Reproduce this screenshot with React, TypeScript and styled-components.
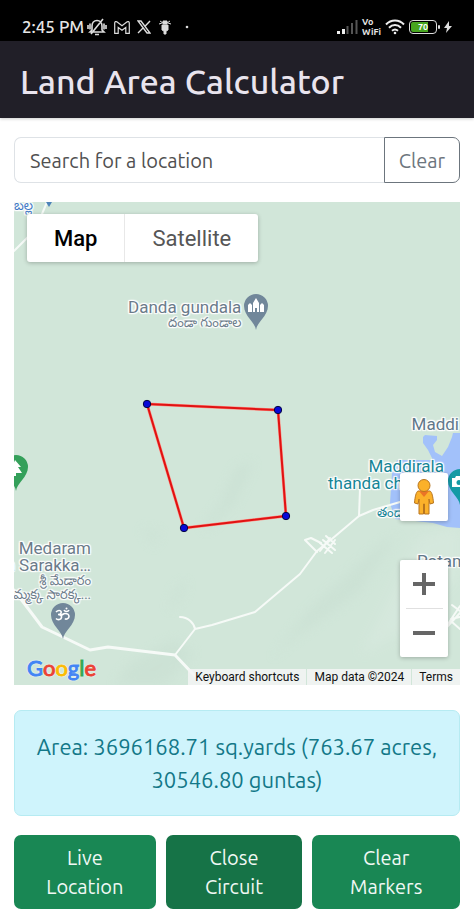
import React from "react";
import styled, { createGlobalStyle } from "styled-components";

const uiFont = `Ubuntu, "Noto Sans", "Open Sans", sans-serif`;
const mapFont = `Roboto, "Noto Sans Telugu", sans-serif`;

const GlobalStyle = createGlobalStyle`
  *, *::before, *::after { box-sizing: border-box; }
  body { margin: 0; background: #fff; font-family: ${uiFont}; }
  button, input { font: inherit; }
`;

const Page = styled.div`
  display: flex;
  flex-direction: column;
`;

const StatusBar = styled.div`
  display: flex;
  align-items: flex-end;
  justify-content: space-between;
  height: 41px;
  padding: 0 22px 3px;
  background: #000;
  color: #e6e6e6;
`;

const StatusGroup = styled.div<{ $gap: number }>`
  display: flex;
  align-items: center;
  gap: ${(p) => p.$gap}px;
  height: 22px;
  svg { display: block; flex: none; }
`;

const Clock = styled.span`
  font-size: 17px;
  font-weight: 500;
  line-height: 22px;
  white-space: nowrap;
`;

const VoWifi = styled.span`
  display: flex;
  flex-direction: column;
  font-size: 9px;
  font-weight: 700;
  line-height: 10px;
`;

const Battery = styled.span`
  display: flex;
  align-items: center;
  gap: 1px;
  &::after { content: ""; width: 2px; height: 4px; background: #ddd; border-radius: 1px; }
`;

const BatteryCell = styled.span`
  width: 28px;
  height: 14px;
  border: 1px solid #ddd;
  border-radius: 4px;
  padding: 1px;
  background: linear-gradient(90deg, #47a51f 70%, #000 70%) content-box;
  font-size: 9px;
  font-weight: 700;
  line-height: 10px;
  text-align: center;
  color: #fff;
`;

const Header = styled.header`
  display: flex;
  align-items: center;
  height: 77px;
  padding: 2px 20px 0;
  background: #211f28;
  box-shadow: 0 1px 3px rgba(0, 0, 0, 0.2);
`;

const Title = styled.h1`
  margin: 0;
  font-size: 34px;
  font-weight: 500;
  line-height: 40px;
  color: #e9e4ee;
  white-space: nowrap;
`;

const Content = styled.main`
  display: flex;
  flex-direction: column;
  padding: 19px 14px 12px;
`;

const SearchRow = styled.form`
  display: flex;
  height: 46px;
  margin-bottom: 19px;
`;

const SearchInput = styled.input`
  flex: 1;
  min-width: 0;
  padding: 0 15px;
  border: 1px solid #dee2e6;
  border-right: 0;
  border-radius: 7px 0 0 7px;
  background: #fff;
  font-size: 20px;
  color: #555;
  outline: none;
  &::placeholder { color: #505050; opacity: 1; }
`;

const ClearButton = styled.button`
  width: 76px;
  padding: 0;
  border: 1px solid #6c757d;
  border-radius: 0 7px 7px 0;
  background: #fff;
  font-size: 20px;
  color: #6c757d;
`;

const MapFrame = styled.section`
  position: relative;
  height: 483px;
  margin-bottom: 25px;
  overflow: hidden;
  background: #d1e6d9;
  font-family: ${mapFont};
`;

const MapCanvas = styled.svg`
  display: block;
  width: 100%;
  height: 100%;
`;

type Place = { $top: number; $left?: number; $right?: number };

const MapLabel = styled.div<Place & { $color: string; $align?: string }>`
  position: absolute;
  top: ${(p) => p.$top}px;
  ${(p) => (p.$left !== undefined ? `left: ${p.$left}px;` : "")}
  ${(p) => (p.$right !== undefined ? `right: ${p.$right}px;` : "")}
  text-align: ${(p) => p.$align ?? "right"};
  font-size: 17px;
  line-height: 17px;
  white-space: nowrap;
  color: ${(p) => p.$color};
  text-shadow: -1px -1px 1px #fff, 1px -1px 1px #fff, -1px 1px 1px #fff,
    1px 1px 1px #fff, 0 0 2px #fff, 0 0 3px #fff;
  small { display: block; font-size: 13px; line-height: 14px; }
`;

const MapPin = styled.svg<Place>`
  position: absolute;
  top: ${(p) => p.$top}px;
  ${(p) => (p.$left !== undefined ? `left: ${p.$left}px;` : "")}
  ${(p) => (p.$right !== undefined ? `right: ${p.$right}px;` : "")}
`;

const MapTypes = styled.div`
  position: absolute;
  top: 12px;
  left: 13px;
  display: flex;
  height: 48px;
  border-radius: 3px;
  background: #fff;
  box-shadow: 0 1px 4px rgba(0, 0, 0, 0.25);
`;

const MapTypeButton = styled.button<{ $active?: boolean }>`
  padding: 0 27px;
  border: 0;
  border-left: ${(p) => (p.$active ? "0" : "1px solid #e8e8e8")};
  background: transparent;
  font-size: 22px;
  font-weight: ${(p) => (p.$active ? 500 : 400)};
  color: ${(p) => (p.$active ? "#000" : "#565656")};
`;

const ControlStack = styled.div`
  position: absolute;
  right: 12px;
  bottom: 28px;
  display: flex;
  flex-direction: column;
  gap: 39px;
`;

const ControlBox = styled.div`
  display: flex;
  flex-direction: column;
  align-items: center;
  width: 48px;
  border-radius: 2px;
  background: #fff;
  box-shadow: 0 1px 4px rgba(0, 0, 0, 0.25);
`;

const ControlButton = styled.button`
  display: flex;
  align-items: center;
  justify-content: center;
  width: 48px;
  height: 48px;
  padding: 0;
  border: 0;
  background: transparent;
`;

const ControlRule = styled.span`
  width: 37px;
  height: 1px;
  background: #e0e0e0;
`;

const Logo = styled.a`
  position: absolute;
  left: 13px;
  bottom: 3px;
  font-family: Lato, sans-serif;
  font-size: 22px;
  font-weight: 400;
  line-height: 28px;
  text-decoration: none;
  text-shadow: 0 0 2px #fff, 0 0 2px #fff;
`;

const LogoLetter = styled.span<{ $color: string }>`
  color: ${(p) => p.$color};
  -webkit-text-stroke: 1px ${(p) => p.$color};
`;

const Attribution = styled.div`
  position: absolute;
  right: 0;
  bottom: 0;
  display: flex;
  gap: 1px;
  font-size: 12px;
  line-height: 16px;
  color: #111;
  > * { padding: 0 7px; background: rgba(245, 245, 245, 0.85); }
`;

const AttributionButton = styled.button`
  border: 0;
  color: inherit;
`;

const AttributionLink = styled.a`
  color: inherit;
  text-decoration: none;
`;

const AreaResult = styled.output`
  display: block;
  margin-bottom: 19px;
  padding: 19px 16px;
  border: 1px solid #b6ebf2;
  border-radius: 7px;
  background: #cff4fc;
  font-size: 22px;
  line-height: 33px;
  text-align: center;
  color: #137888;
`;

const Actions = styled.div`
  display: grid;
  grid-template-columns: 142fr 137fr 148fr;
  gap: 10px;
`;

const ActionButton = styled.button<{ $pressed?: boolean }>`
  padding: 8px 24px;
  border: 0;
  border-radius: 7px;
  background: ${(p) => (p.$pressed ? "#167347" : "#198754")};
  font-size: 20px;
  line-height: 29px;
  color: #f0f8f4;
`;

const googleLetters: [string, string][] = [
  ["G", "#4285f4"],
  ["o", "#ea4335"],
  ["o", "#fbbc05"],
  ["g", "#4285f4"],
  ["l", "#34a853"],
  ["e", "#ea4335"],
];

const corners = [
  [133, 202],
  [264, 208],
  [272, 314],
  [170, 326],
];

const pinPath = "M12 36C11 28 0 22 0 12a12 12 0 0 1 24 0c0 10-11 16-12 24z";

function StatusIcons() {
  return (
    <StatusBar>
      <StatusGroup $gap={7}>
        <StatusGroup $gap={3}>
          <Clock>2:45 PM</Clock>
          <svg width="20" height="18" viewBox="0 0 20 18" fill="none" stroke="#ddd" strokeWidth="1.600">
            <path d="M5 12V8c0-3 2-5.500 5-5.500s5 2.500 5 5.500v4l2 2H3zM8 16.500h4M4 16L16 1M1 7v4M3 5.500v6M17 5.500v6M19 7v4" />
          </svg>
        </StatusGroup>
        <svg width="16" height="13" viewBox="0 0 16 13" fill="none" stroke="#ddd" strokeWidth="1.200">
          <path d="M.7 12.300V2C.7.600 2 .2 3.200 1L8 4.700 12.800 1c1.200-.8 2.500-.4 2.500 1v10.300h-3.500V6.500L8 9.300 4.200 6.500v5.800z" />
        </svg>
        <svg width="14" height="14" viewBox="0 0 14 14" fill="none" stroke="#ddd" strokeWidth="1.400">
          <path d="M1 1h3l9 12h-3zM13 1L8 6.300M6 8L1 13" />
        </svg>
        <svg width="14" height="16" viewBox="0 0 14 16" fill="#ddd" stroke="#ddd">
          <path d="M2 2l3 2h4l3-2M1 5l3-1M13 5l-3-1" fill="none" />
          <path d="M5 2h4v3H5zM4 6h6v5l-2 1v3H6v-3l-2-1z" />
        </svg>
        <svg width="24" height="4" viewBox="0 0 24 4" fill="#ddd">
          <circle cx="8" cy="2" r="1.300" />
        </svg>
      </StatusGroup>
      <StatusGroup $gap={4}>
        <svg width="21" height="14" viewBox="0 0 21 14">
          <path d="M0 11h3v3H0zM5 9h3v5H5z" fill="#eee" />
          <path d="M9.500 6h2v8h-2zM14 3h2v11h-2zM18.500 0h2v14h-2z" fill="#555" />
        </svg>
        <VoWifi>
          <span>Vo</span>
          <span>WiFi</span>
        </VoWifi>
        <svg width="20" height="16" viewBox="0 0 20 16" fill="none" stroke="#eee" strokeWidth="2">
          <path d="M1 5.500c5-5.300 13-5.300 18 0M4 8.700c3.500-3.600 8.500-3.600 12 0M7 11.700c2-1.700 4-1.700 6 0" />
          <circle cx="10" cy="14" r="1.300" fill="#eee" stroke="none" />
        </svg>
        <Battery>
          <BatteryCell>70</BatteryCell>
        </Battery>
        <svg width="8" height="12" viewBox="0 0 8 12" fill="#ddd">
          <path d="M5 0L0 7h3l-1 5 6-7H5z" />
        </svg>
      </StatusGroup>
    </StatusBar>
  );
}

function Terrain() {
  return (
    <MapCanvas viewBox="0 0 446 483" preserveAspectRatio="xMidYMid slice" aria-hidden="true">
      <defs>
        <filter id="soft" x="-20%" y="-20%" width="140%" height="140%">
          <feGaussianBlur stdDeviation="6" />
        </filter>
      </defs>
      <g filter="url(#soft)" fill="#c5dccf" opacity="0.4">
        <path d="M222 265l18 -5-20 42-25 25-8 0 20-26z" />
        <path d="M360 348l25-18-40 60-70 50-20 20 40-52z" />
        <path d="M115 462l45-25 20 14-30 32h-50z" />
        <path d="M126 325l22 4-8 18zM160 385l14-8-5 20-16 14z" opacity="0.6" />
        <path d="M405 335l41-12v50l-60 60-40 20z" fill="#dcebe2" />
      </g>
      <path
        d="M409 235l2-2 12 1v4l-4 5 2 7 7 4 6-9 4-10 1-4h7v95l-13-1-14-4-18-2-20-2-5-16 2-30 5-13h36l-5-10-5-7z"
        fill="#a2c1fa"
      />
      <g fill="none" stroke="#f6faf7" strokeLinejoin="round" strokeLinecap="round">
        <path d="M0 388l19 25 9 12 21 10 27 13 18-3 67 8 17 18 15 14" strokeWidth="3" />
        <path
          d="M161 453l20-26c-1-6-7-12-15-12M181 427l17-4 43-13 45-38 17-23 16-13 26-22 1-27M345 314l14-6 27-8M303 350l-12-12 6-2 10 5"
          strokeWidth="2"
        />
        <path d="M306 341l12 10M309 338l12 10M312 334l9 8M306 349l10-13M311 351l10-13" strokeWidth="2" />
        <path d="M0 49l14-14M28 12l5-12" strokeWidth="2" />
        <path d="M438 403l8 6M437 417l9-2M438 420l8 7M434 422l12-18M433 425l13-14" strokeWidth="2" />
      </g>
      <path d="M32 0h6l-3 5z" fill="#4d83b9" />
      <polygon
        points={corners.map((c) => c.join(",")).join(" ")}
        fill="none"
        stroke="#ff8b80"
        strokeWidth="3"
        strokeLinejoin="round"
      />
      <polygon
        points={corners.map((c) => c.join(",")).join(" ")}
        fill="none"
        stroke="#e01212"
        strokeWidth="2"
        strokeLinejoin="round"
      />
      {corners.map(([x, y]) => (
        <circle key={x} cx={x} cy={y} r="3.700" fill="#0808d8" stroke="#050540" />
      ))}
    </MapCanvas>
  );
}

function LandMap() {
  return (
    <MapFrame aria-label="Map">
      <Terrain />
      <MapLabel $top={-3} $left={0} $color="#3f79c5" $align="left">
        <small>బల్ల</small>
      </MapLabel>
      <MapLabel $top={97} $left={114} $color="#6b7b8a">
        Danda gundala
        <small>దండా గుండాల</small>
      </MapLabel>
      <MapPin $top={92} $left={230} width="24" height="36" viewBox="0 0 24 36">
        <path d={pinPath} fill="#71879a" />
        <path d="M4 18v-7l2-2 2 2v7zM9 18V9l3-5 3 5v9h-2v-4h-2v4zM16 18v-7l2-2 2 2v7z" fill="#fff" />
      </MapPin>
      <MapPin $top={253} $left={-10} width="24" height="36" viewBox="0 0 24 36">
        <path d={pinPath} fill="#34a05a" />
        <path d="M11 5l6 7h-3l4 6h-6v3h-2v-3H6z" fill="#fff" />
      </MapPin>
      <MapLabel $top={338} $right={369} $color="#6b7b8a">
        Medaram
        <br />
        a Sarakka…
        <small>శ్రీ మేడారం</small>
        <small>మ్మక్క సారక్క...</small>
      </MapLabel>
      <MapPin $top={401} $left={37} width="24" height="36" viewBox="0 0 24 36">
        <path d={pinPath} fill="#71879a" />
        <path
          d="M5 9c3-3 6-1 5 1 0 1-2 1.500-3 1.500 2 0 4 1 3.500 3S7 17.500 5 15.500M10 12c2 0 2-1.500 4-1.500s4 1 4 3-3 3.500-4 2M13 7c1 2 4 2 5 0"
          fill="none"
          stroke="#fff"
          strokeWidth="1.600"
        />
        <circle cx="15.500" cy="5.500" r="1" fill="#fff" />
      </MapPin>
      <MapLabel $top={214} $right={1} $color="#62788a">
        Maddi
      </MapLabel>
      <MapLabel $top={256} $right={16} $color="#168596">
        Maddirala
      </MapLabel>
      <MapLabel $top={273} $left={314} $color="#168596" $align="left">
        thanda che
      </MapLabel>
      <MapLabel $top={304} $left={363} $color="#168596" $align="left">
        <small>తండా</small>
      </MapLabel>
      <MapPin $top={267} $right={-12} width="24" height="36" viewBox="0 0 24 36">
        <path d={pinPath} fill="#159aa5" />
        <path d="M4 9h3l1-2h5l1 2h5v9H4z" fill="#fff" />
        <circle cx="11" cy="13.500" r="2.500" fill="#159aa5" />
      </MapPin>
      <MapLabel $top={351} $left={403} $color="#62788a" $align="left">
        Potam
      </MapLabel>

      <MapTypes>
        <MapTypeButton type="button" $active>
          Map
        </MapTypeButton>
        <MapTypeButton type="button">Satellite</MapTypeButton>
      </MapTypes>

      <ControlStack>
        <ControlBox>
          <ControlButton type="button" aria-label="Street View">
            <svg width="22" height="38" viewBox="0 0 22 38" fill="#fbb12a" stroke="#b8751e">
              <path d="M5 13h12c2 1 3 6 3.500 12L17 26l-1-5v15h-4.500V26h-1v10H6V21l-1 5-3.500-1C2 19 3 14 5 13z" />
              <path d="M6 13h10l-5 6z" fill="#ea7426" stroke="none" />
              <circle cx="11" cy="7.500" r="6" />
            </svg>
          </ControlButton>
        </ControlBox>
        <ControlBox>
          <ControlButton type="button" aria-label="Zoom in">
            <svg width="22" height="22" viewBox="0 0 22 22" fill="#666">
              <path d="M9 0h4v9h9v4h-9v9H9v-9H0V9h9z" />
            </svg>
          </ControlButton>
          <ControlRule />
          <ControlButton type="button" aria-label="Zoom out">
            <svg width="22" height="22" viewBox="0 0 22 22" fill="#666">
              <path d="M0 9h22v4H0z" />
            </svg>
          </ControlButton>
        </ControlBox>
      </ControlStack>

      <Logo href="#google" aria-label="Google">
        {googleLetters.map(([letter, color], i) => (
          <LogoLetter key={i} $color={color}>
            {letter}
          </LogoLetter>
        ))}
      </Logo>
      <Attribution>
        <AttributionButton type="button">Keyboard shortcuts</AttributionButton>
        <span>Map data ©2024</span>
        <AttributionLink href="#terms">Terms</AttributionLink>
      </Attribution>
    </MapFrame>
  );
}

export default function App() {
  return (
    <Page>
      <GlobalStyle />
      <StatusIcons />
      <Header>
        <Title>Land Area Calculator</Title>
      </Header>
      <Content>
        <SearchRow onSubmit={(e) => e.preventDefault()}>
          <SearchInput type="text" aria-label="Search for a location" placeholder="Search for a location" />
          <ClearButton type="reset">Clear</ClearButton>
        </SearchRow>
        <LandMap />
        <AreaResult>Area: 3696168.71 sq.yards (763.67 acres, 30546.80 guntas)</AreaResult>
        <Actions>
          <ActionButton type="button">Live Location</ActionButton>
          <ActionButton type="button" $pressed>
            Close Circuit
          </ActionButton>
          <ActionButton type="button">Clear Markers</ActionButton>
        </Actions>
      </Content>
    </Page>
  );
}
